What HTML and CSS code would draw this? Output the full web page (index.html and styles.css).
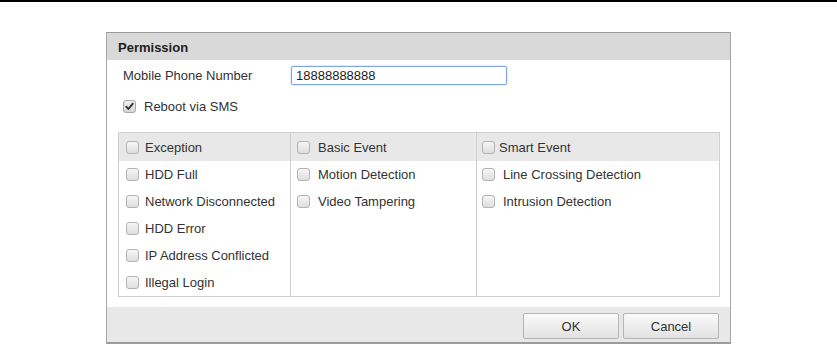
FILE: index.html
```html
<!DOCTYPE html>
<html>
<head>
<meta charset="utf-8">
<link rel="stylesheet" href="styles.css">
</head>
<body>
<div class="topbar"></div>
<div class="dialog">
  <div class="dlg-head">Permission</div>
  <div class="dlg-body">
    <div class="field-row">
      <span class="field-label">Mobile Phone Number</span>
      <span class="text-input">18888888888</span>
    </div>
    <div class="check-row reboot">
      <span class="cb checked"><svg viewBox="0 0 13 13" width="13" height="13"><path d="M3.2 6.6 L5.4 9 L9.8 3.6" fill="none" stroke="#2b2b2b" stroke-width="1.8" stroke-linecap="round" stroke-linejoin="round"/></svg></span>
      <span>Reboot via SMS</span>
    </div>
    <div class="perm-table">
      <div class="col col1">
        <div class="cell head"><span class="cb"></span><span class="lbl">Exception</span></div>
        <div class="cell"><span class="cb"></span><span class="lbl">HDD Full</span></div>
        <div class="cell"><span class="cb"></span><span class="lbl">Network Disconnected</span></div>
        <div class="cell"><span class="cb"></span><span class="lbl">HDD Error</span></div>
        <div class="cell"><span class="cb"></span><span class="lbl">IP Address Conflicted</span></div>
        <div class="cell"><span class="cb"></span><span class="lbl">Illegal Login</span></div>
      </div>
      <div class="col col2">
        <div class="cell head"><span class="cb"></span><span class="lbl">Basic Event</span></div>
        <div class="cell"><span class="cb"></span><span class="lbl">Motion Detection</span></div>
        <div class="cell"><span class="cb"></span><span class="lbl">Video Tampering</span></div>
      </div>
      <div class="col col3">
        <div class="cell head tight"><span class="cb"></span><span class="lbl">Smart Event</span></div>
        <div class="cell"><span class="cb"></span><span class="lbl">Line Crossing Detection</span></div>
        <div class="cell"><span class="cb"></span><span class="lbl">Intrusion Detection</span></div>
      </div>
    </div>
  </div>
  <div class="dlg-foot">
    <button class="btn">OK</button>
    <button class="btn">Cancel</button>
  </div>
</div>
</body>
</html>
```
FILE: styles.css
```css
html, body {
  margin: 0;
  padding: 0;
  background: #fff;
}
body {
  font-family: "Liberation Sans", Arial, sans-serif;
  font-size: 13px;
  color: #333;
}
.topbar {
  height: 2px;
  background: #000;
}
.dialog {
  margin: 30px 0 0 106px;
  width: 625px;
  height: 312px;
  box-sizing: border-box;
  border: 1px solid #a6a6a6;
  border-top-color: #9a9a9a;
  border-bottom: 2px solid #9c9c9c;
  display: flex;
  flex-direction: column;
}
.dlg-head {
  height: 27px;
  background: #d9d9d9;
  font-weight: bold;
  padding-left: 11px;
  display: flex;
  align-items: center;
  padding-top: 1px;
  box-sizing: border-box;
  color: #222;
}
.dlg-body {
  flex: 1;
  padding: 6px 11px 0 11px;
  display: flex;
  flex-direction: column;
}
.field-row {
  display: flex;
  align-items: center;
  height: 19px;
  padding-left: 5px;
}
.field-label {
  width: 168px;
}
.text-input {
  width: 216px;
  height: 19px;
  box-sizing: border-box;
  border: 1px solid #7fa6d6;
  border-radius: 2px;
  box-shadow: 0 0 2px rgba(80, 140, 220, 0.5);
  padding: 0 4px;
  display: flex;
  align-items: center;
  color: #222;
}
.check-row {
  display: flex;
  align-items: center;
  gap: 8px;
}
.reboot {
  padding-left: 5px;
  margin-top: 12px;
  height: 18px;
}
.cb {
  width: 13px;
  height: 13px;
  box-sizing: border-box;
  border: 1px solid #b3b3b3;
  border-radius: 3px;
  background: linear-gradient(#f6f6f6, #dedede);
  flex: none;
  display: inline-block;
}
.cb.checked {
  background: linear-gradient(#f0f0f0, #d6d6d6);
  border-color: #a8a8a8;
}
.cb svg {
  display: block;
  margin: -1px;
}
.perm-table {
  margin-top: 17px;
  width: 602px;
  height: 165px;
  box-sizing: border-box;
  border: 1px solid #cfcfcf;
  display: grid;
  grid-template-columns: 171px 186px 1fr;
}
.col {
  display: flex;
  flex-direction: column;
}
.col1 .cell { padding-left: 7px; }
.col2 { border-left: 1px solid #cfcfcf; }
.col2 .cell { padding-left: 6px; }
.col3 { border-left: 1px solid #cfcfcf; }
.col3 .cell { padding-left: 5px; }
.cell {
  height: 27px;
  flex: none;
  display: flex;
  align-items: center;
  gap: 8px;
}
.col1 .cell { gap: 6px; }
.cell.head {
  height: 28px;
  background: #e8e8e8;
}
.cell.head.tight { gap: 4px; }
.dlg-foot {
  height: 35px;
  background: #e8e8e8;
  display: flex;
  justify-content: flex-end;
  align-items: flex-start;
  gap: 4px;
  padding: 6px 11px 0 0;
  box-sizing: border-box;
}
.btn {
  width: 96px;
  height: 26px;
  font-family: "Liberation Sans", Arial, sans-serif;
  font-size: 13px;
  color: #333;
  border: 1px solid #b5b5b5;
  border-radius: 2px;
  background: linear-gradient(#fafafa, #e2e2e2);
  padding: 0;
}
```
